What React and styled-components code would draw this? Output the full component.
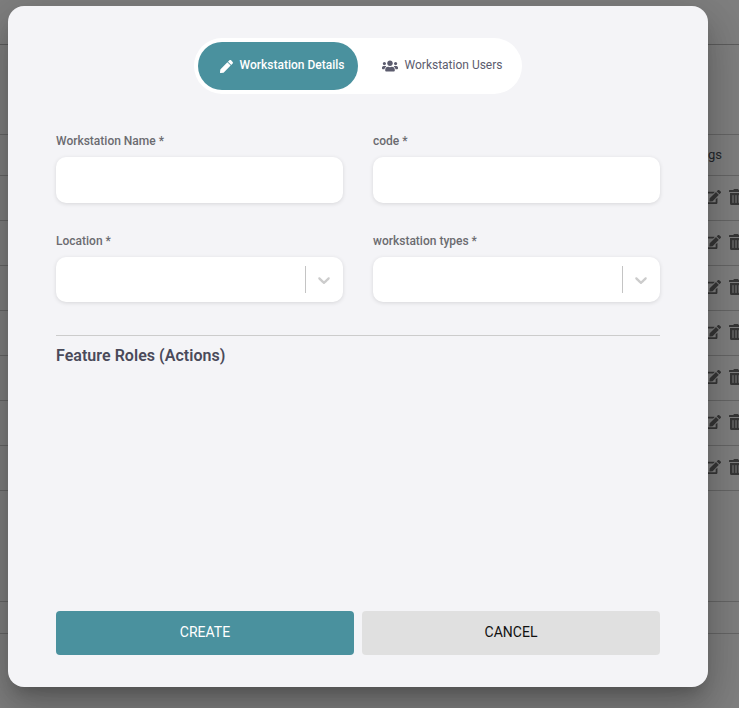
import styled, { createGlobalStyle } from 'styled-components'
import { FaPen, FaUsers, FaEdit, FaTrashAlt } from 'react-icons/fa'

const GlobalStyle = createGlobalStyle`
    html, body {
        margin: 0;
        padding: 0;
        height: 100%;
        overflow: hidden;
        background: #fff;
        font-family: Roboto, "Liberation Sans", sans-serif;
    }
`

const rows = [0, 1, 2, 3, 4, 5, 6]

// page behind the modal

const Page = styled.div`
    position: relative;
    width: 739px;
    height: 708px;
    overflow: hidden;
    background: #fff;
`

const TopBar = styled.div`
    height: 45px;
    border-bottom: 1px solid #bbb;
    box-sizing: border-box;
    margin-bottom: 89px;
`

const TableHead = styled.div`
    height: 42px;
    box-sizing: border-box;
    padding: 0 17px 2px 0;
    border-top: 1px solid #ccc;
    border-bottom: 1px solid #ccc;
    display: flex;
    align-items: center;
    justify-content: flex-end;
    color: #4a5058;
    font-size: 13px;
`

const Row = styled.div`
    height: 45px;
    box-sizing: border-box;
    padding: 0 0 2px;
    border-bottom: 1px solid #ccc;
    display: flex;
    align-items: center;
    justify-content: flex-end;
    gap: 7px;
    color: #6e6e6e;
    font-size: 16px;

    svg:last-child {
        margin-right: -5px;
    }
`

const Pager = styled.div`
    margin-top: 110px;
    height: 33px;
    box-sizing: border-box;
    border-top: 1px solid #ccc;
    border-bottom: 1px solid #ccc;
`

const Backdrop = styled.div`
    position: absolute;
    inset: 0;
    background: rgba(0, 0, 0, .5);
`

// modal

const Modal = styled.div`
    position: absolute;
    left: 8px;
    top: 6px;
    width: 700px;
    height: 681px;
    box-sizing: border-box;
    padding: 32px 48px;
    display: flex;
    flex-direction: column;
    background: #f4f4f7;
    border-radius: 16px;
    box-shadow: 0 11px 15px -7px rgba(0, 0, 0, .2), 0 24px 38px 3px rgba(0, 0, 0, .14), 0 9px 46px 8px rgba(0, 0, 0, .12);
`

const Tabs = styled.div`
    align-self: center;
    display: flex;
    padding: 4px;
    background: #fff;
    border-radius: 28px;
`

const Tab = styled.div`
    width: 160px;
    height: 48px;
    box-sizing: border-box;
    padding: 0 0 2px 8px;
    display: flex;
    align-items: center;
    justify-content: center;
    gap: 7px;
    border-radius: 24px;
    font-size: 12px;
    font-weight: ${props => props.$active ? 500 : 400};
    color: ${props => props.$active ? '#fff' : '#5c5c6e'};
    background: ${props => props.$active ? '#4a919e' : 'transparent'};

    svg {
        font-size: ${props => props.$active ? '13px' : '16px'};
        margin-top: 2px;
    }
`

const FormGrid = styled.div`
    display: grid;
    grid-template-columns: 287px 287px;
    column-gap: 30px;
    row-gap: 30px;
    margin-top: 39px;
`

const Field = styled.div`
    display: flex;
    flex-direction: column;
`

const Label = styled.label`
    height: 16px;
    margin-bottom: 8px;
    font-size: 12px;
    line-height: 16px;
    font-weight: 500;
    color: #6b6b70;
`

const Input = styled.div`
    height: 46px;
    background: #fff;
    border-radius: 10px;
    box-shadow: 0 1px 4px rgba(0, 0, 0, .12);
`

const Select = styled(Input)`
    height: 45px;
    display: flex;
    align-items: center;
    justify-content: flex-end;
`

const Separator = styled.span`
    width: 1px;
    height: 27px;
    background: #c4c4c4;
`

const Chevron = styled.svg`
    width: 20px;
    height: 20px;
    margin: 0 9px 0 8px;
    fill: #ccc;
`

const Divider = styled.hr`
    width: 100%;
    margin: 33px 0 0;
    border: 0;
    border-top: 1px solid #ccc;
`

const Heading = styled.h3`
    margin: 10px 0 0;
    font-size: 16px;
    line-height: 20px;
    font-weight: 600;
    letter-spacing: .04px;
    color: #4a4a5a;
`

const Buttons = styled.div`
    margin-top: auto;
    display: flex;
    gap: 8px;
`

const Button = styled.button`
    flex: 1;
    height: 44px;
    padding: 0 0 2px;
    border: 0;
    border-radius: 4px;
    font-family: inherit;
    font-size: 14px;
    text-transform: uppercase;
    color: ${props => props.$primary ? '#fff' : '#111'};
    background: ${props => props.$primary ? '#4a919e' : '#e0e0e0'};
`

function SelectField({ label }) {
    return (
        <Field>
            <Label>{label} *</Label>
            <Select>
                <Separator />
                <Chevron viewBox="0 0 20 20">
                    <path d="M4.516 7.548c0.436-0.446 1.043-0.481 1.576 0l3.908 3.747 3.908-3.747c0.533-0.481 1.141-0.446 1.574 0 0.436 0.445 0.408 1.197 0 1.615-0.406 0.418-4.695 4.502-4.695 4.502-0.217 0.223-0.502 0.335-0.787 0.335s-0.57-0.112-0.789-0.335c0 0-4.287-4.084-4.695-4.502s-0.436-1.17 0-1.615z" />
                </Chevron>
            </Select>
        </Field>
    )
}

export default function App() {
    return (
        <Page>
            <GlobalStyle />
            <TopBar />
            <TableHead>ngs</TableHead>
            {rows.map((row) => (
                <Row key={row}>
                    <FaEdit />
                    <FaTrashAlt />
                </Row>
            ))}
            <Pager />
            <Backdrop />
            <Modal>
                <Tabs>
                    <Tab $active><FaPen />Workstation Details</Tab>
                    <Tab><FaUsers />Workstation Users</Tab>
                </Tabs>
                <FormGrid>
                    <Field>
                        <Label>Workstation Name *</Label>
                        <Input />
                    </Field>
                    <Field>
                        <Label>code *</Label>
                        <Input />
                    </Field>
                    <SelectField label="Location" />
                    <SelectField label="workstation types" />
                </FormGrid>
                <Divider />
                <Heading>Feature Roles (Actions)</Heading>
                <Buttons>
                    <Button $primary>Create</Button>
                    <Button>Cancel</Button>
                </Buttons>
            </Modal>
        </Page>
    )
}
